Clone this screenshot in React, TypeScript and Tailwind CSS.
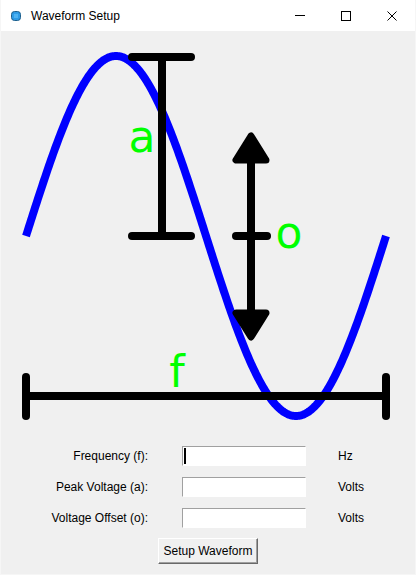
import React from "react";

function wavePath(): string {
  const pts: string[] = [];
  const x0 = 26;
  const x1 = 386;
  const mid = 236;
  const amp = 180;
  for (let x = x0; x <= x1; x += 1) {
    const y = mid - amp * Math.sin((2 * Math.PI * (x - x0)) / (x1 - x0));
    pts.push(`${x === x0 ? "M" : "L"}${x},${y.toFixed(2)}`);
  }
  return pts.join(" ");
}

function TitleBar() {
  return (
    <div className="flex h-[31px] items-center bg-white">
      <svg className="ml-[10px]" width="10" height="10" viewBox="0 0 10 10">
        <rect x="0.5" y="0.5" width="9" height="9" rx="3" fill="#2e9be6" stroke="#1d5f8c" strokeWidth="1" />
        <rect x="3" y="3" width="4" height="4" fill="#4fb3f2" />
      </svg>
      <span className="ml-[10px] text-[12px] text-black">Waveform Setup</span>
      <div className="ml-auto flex h-full">
        <div className="flex h-full w-[46px] items-center justify-center">
          <div className="h-px w-[10px] bg-black" />
        </div>
        <div className="flex h-full w-[46px] items-center justify-center">
          <div className="h-[10px] w-[10px] border border-black" />
        </div>
        <div className="flex h-full w-[46px] items-center justify-center">
          <svg width="10" height="10" viewBox="0 0 10 10">
            <path d="M0.5 0.5 L9.5 9.5 M9.5 0.5 L0.5 9.5" stroke="black" strokeWidth="1" />
          </svg>
        </div>
      </div>
    </div>
  );
}

function Canvas() {
  return (
    <svg width="414" height="409" viewBox="1 31 414 409" className="block">
      <path d={wavePath()} fill="none" stroke="#0000ff" strokeWidth="8" />
      {/* amplitude marker */}
      <g stroke="#000" strokeWidth="8" strokeLinecap="round" fill="none">
        <line x1="132" y1="57" x2="191" y2="57" />
        <line x1="132" y1="236" x2="191" y2="236" />
        <line x1="162" y1="57" x2="162" y2="236" strokeLinecap="butt" />
        {/* offset marker */}
        <line x1="236" y1="236" x2="267" y2="236" />
        <line x1="251" y1="158" x2="251" y2="314" strokeLinecap="butt" />
        {/* frequency marker */}
        <line x1="26" y1="396" x2="386" y2="396" strokeLinecap="butt" />
        <line x1="26" y1="377" x2="26" y2="416" />
        <line x1="386" y1="377" x2="386" y2="416" />
      </g>
      <g fill="#000" stroke="#000" strokeWidth="7" strokeLinejoin="round">
        <polygon points="251,136 236,160 266,160" />
        <polygon points="236,313 266,313 251,337" />
      </g>
      <g fill="#00ff00" fontFamily="'DejaVu Sans', sans-serif" fontSize="44">
        <text x="142" y="152" textAnchor="middle">a</text>
        <text x="289" y="248" textAnchor="middle">o</text>
        <text x="177" y="387" textAnchor="middle">f</text>
      </g>
    </svg>
  );
}

function Row({ label, unit, focused }: { label: string; unit: string; focused?: boolean }) {
  return (
    <div className="flex h-[20px] items-center">
      <div className="w-[147px] text-right">{label}</div>
      <div className="relative ml-[34px] h-[20px] w-[124px] border-t border-l border-r border-b border-t-[#a0a0a0] border-l-[#a0a0a0] border-r-white border-b-white bg-white">
        {focused && <span className="absolute left-[1px] top-[1px] h-[16px] w-[2px] bg-black" />}
      </div>
      <div className="ml-[32px]">{unit}</div>
    </div>
  );
}

export default function App() {
  return (
    <div
      className="flex h-[575px] w-[416px] flex-col overflow-hidden border-l border-r border-b border-[#f6f6f6] bg-[#f0f0f0] text-[12px] text-black"
      style={{ fontFamily: "'Liberation Sans', Arial, sans-serif" }}
    >
      <TitleBar />
      <Canvas />
      <div className="flex flex-col gap-[11px] pt-[6px]">
        <Row label="Frequency (f):" unit="Hz" focused />
        <Row label="Peak Voltage (a):" unit="Volts" />
        <Row label="Voltage Offset (o):" unit="Volts" />
      </div>
      <div className="mt-[10px] flex">
        <button className="ml-[157px] h-[26px] w-[100px] border border-t-white border-l-white border-r-[#696969] border-b-[#696969] bg-[#f0f0f0] text-[12px] shadow-[inset_-1px_-1px_0_#a0a0a0]">
          Setup Waveform
        </button>
      </div>
    </div>
  );
}
